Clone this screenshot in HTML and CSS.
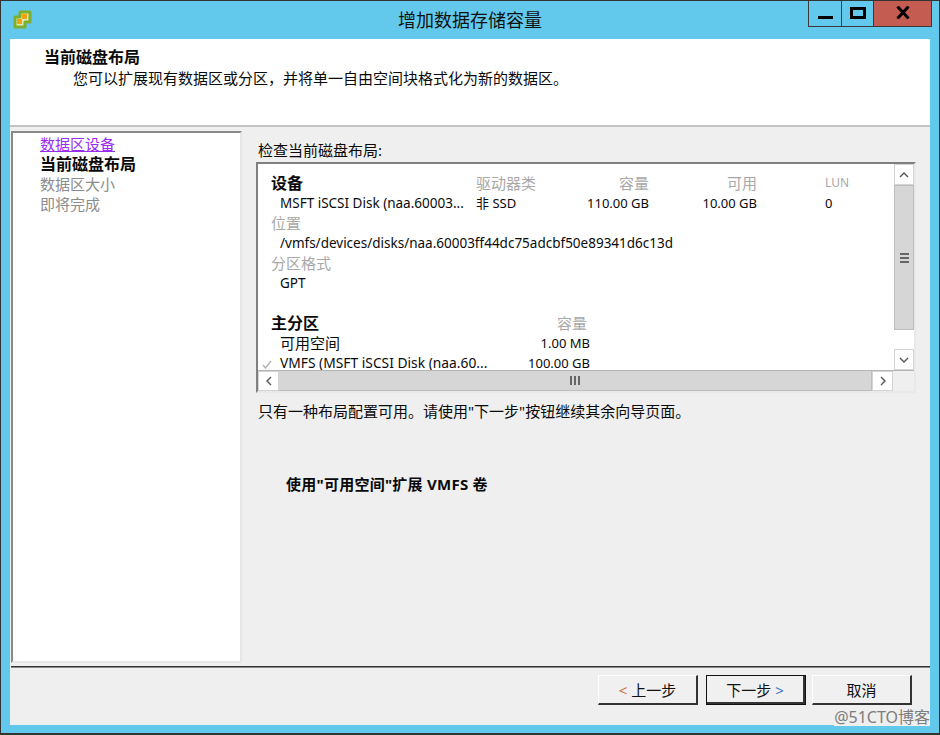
FILE: index.html
```html
<!DOCTYPE html>
<html lang="zh-CN">
<head>
  <meta charset="UTF-8">
  <title>增加数据存储容量</title>
  <link rel="stylesheet" href="styles.css">
</head>
<body>
  <div class="window">
    <div class="titlebar">
      <svg class="app-icon" width="21" height="21" viewBox="0 0 21 21">
        <path d="M8 3H18V13H13V18H3V8H8z" fill="#d8ecb4" stroke="#7fae2e" stroke-width="3" stroke-linejoin="round"/>
        <rect x="10" y="5" width="5" height="5" fill="#f2a30f"/>
        <rect x="5" y="10" width="5" height="5" fill="#f2a30f"/>
      </svg>
      <div class="title">增加数据存储容量</div>
      <div class="win-btns">
        <div class="win-btn min-btn"><span class="min-glyph"></span></div>
        <div class="win-btn max-btn"><span class="max-glyph"></span></div>
        <div class="win-btn close-btn">
          <svg width="14" height="13" viewBox="0 0 14 13"><path d="M1.500 0.500l11 12M12.500 0.500l-11 12" stroke="#000" stroke-width="3"/></svg>
        </div>
      </div>
    </div>

    <div class="client">
      <div class="header">
        <h1>当前磁盘布局</h1>
        <p>您可以扩展现有数据区或分区，并将单一自由空间块格式化为新的数据区。</p>
      </div>

      <div class="main">
        <div class="steps">
          <a href="#" class="step-link">数据区设备</a>
          <div class="step-current">当前磁盘布局</div>
          <div class="step-next">数据区大小</div>
          <div class="step-next">即将完成</div>
        </div>

        <div class="content">
          <div class="list-label">检查当前磁盘布局:</div>
          <div class="listbox">
            <div class="list-view">
              <div class="list-body">
                <div class="row device-head">
                  <b>设备</b><span class="head col-type">驱动器类</span><span class="head col-cap">容量</span><span class="head col-free">可用</span><span class="head col-lun">LUN</span>
                </div>
                <div class="row device-row">
                  <span class="name">MSFT iSCSI Disk (naa.60003...</span><span class="col-type">非 SSD</span><span class="col-cap">110.00 GB</span><span class="col-free">10.00 GB</span><span class="col-lun">0</span>
                </div>
                <div class="row head">位置</div>
                <div class="row value">/vmfs/devices/disks/naa.60003ff44dc75adcbf50e89341d6c13d</div>
                <div class="row head">分区格式</div>
                <div class="row value">GPT</div>
                <div class="row spacer"></div>
                <div class="row part-row">
                  <b>主分区</b><span class="head part-cap part-head">容量</span>
                </div>
                <div class="row part-row indent">
                  <span class="part-name">可用空间</span><span class="part-cap">1.00 MB</span>
                </div>
                <div class="row part-row indent last-row">
                  <svg class="check" width="10" height="9" viewBox="0 0 10 9"><path d="M1 5l2.500 3L9 1" fill="none" stroke="#b5b5b5" stroke-width="1.500"/></svg>
                  <span class="vmfs-name">VMFS (MSFT iSCSI Disk (naa.60...</span><span class="part-cap">100.00 GB</span>
                </div>
              </div>
              <div class="vscroll">
                <div class="sb-btn"><svg width="10" height="6" viewBox="0 0 10 6"><path d="M1 5l4-4 4 4" fill="none" stroke="#555" stroke-width="1.400"/></svg></div>
                <div class="v-thumb"><span class="grip-h"></span></div>
                <div class="v-rest"></div>
                <div class="sb-btn"><svg width="10" height="6" viewBox="0 0 10 6"><path d="M1 1l4 4 4-4" fill="none" stroke="#555" stroke-width="1.400"/></svg></div>
              </div>
            </div>
            <div class="hscroll">
              <div class="sb-btn sb-btn-h"><svg width="6" height="10" viewBox="0 0 6 10"><path d="M5 1L1 5l4 4" fill="none" stroke="#555" stroke-width="1.400"/></svg></div>
              <div class="h-thumb"><span class="grip-v"></span></div>
              <div class="sb-btn sb-btn-h"><svg width="6" height="10" viewBox="0 0 6 10"><path d="M1 1l4 4-4 4" fill="none" stroke="#555" stroke-width="1.400"/></svg></div>
              <div class="sb-corner"></div>
            </div>
          </div>
          <p class="note">只有一种布局配置可用。请使用"下一步"按钮继续其余向导页面。</p>
          <p class="action">使用"可用空间"扩展 VMFS 卷</p>
        </div>
      </div>

      <div class="footer">
        <button class="btn"><span class="lt">&lt;</span> 上一步</button>
        <button class="btn btn-default">下一步 <span class="gt">&gt;</span></button>
        <button class="btn">取消</button>
      </div>
    </div>
    <div class="watermark">@51CTO博客</div>
  </div>
</body>
</html>
```

FILE: styles.css
```css
* {
  margin: 0;
  padding: 0;
  box-sizing: border-box;
}

body {
  width: 940px;
  height: 735px;
  overflow: hidden;
  font-family: "Noto Sans", "Noto Sans CJK SC", sans-serif;
  font-size: 15px;
  color: #0a0a0a;
}

.window {
  position: relative;
  width: 940px;
  height: 735px;
  background-color: #62c9ec;
  border: 1px solid #333;
  border-bottom-width: 2px;
  padding: 0 9px 8px 9px;
  display: flex;
  flex-direction: column;
}

/* Title bar */
.titlebar {
  height: 38px;
  display: flex;
  align-items: flex-start;
  position: relative;
}

.app-icon {
  margin: 8px 0 0 2px;
}

.title {
  position: absolute;
  left: 0;
  right: 0;
  top: 8px;
  text-align: center;
  font-size: 18px;
  line-height: 22px;
  color: #111;
}

.win-btns {
  position: absolute;
  top: 0;
  right: -2px;
  display: flex;
  height: 26px;
  border: 1px solid #3a3a3a;
  border-top: none;
}

.win-btn {
  display: flex;
  align-items: center;
  justify-content: center;
}

.min-btn {
  width: 33px;
  border-right: 1px solid #3a3a3a;
}

.max-btn {
  width: 32px;
  border-right: 1px solid #3a3a3a;
}

.close-btn {
  width: 57px;
  background-color: #c45c52;
}

.min-glyph {
  width: 15px;
  height: 3px;
  background-color: #000;
  margin-top: 8px;
}

.max-glyph {
  width: 16px;
  height: 12px;
  border: 3px solid #000;
  margin-top: -2px;
}

.close-btn svg {
  margin-top: -2px;
}

/* Client area */
.client {
  flex: 1;
  background-color: #efefef;
  display: flex;
  flex-direction: column;
  min-height: 0;
}

.header {
  height: 88px;
  background-color: #fff;
  border-bottom: 2px solid #c4c4c4;
  padding: 8px 0 0 34px;
}

.header h1 {
  font-size: 16px;
  line-height: 21px;
  font-weight: bold;
}

.header p {
  font-size: 15px;
  line-height: 20px;
  padding-left: 29px;
}

.main {
  flex: 1;
  display: flex;
  padding: 4px 0 0 1px;
  min-height: 0;
}

.steps {
  width: 231px;
  height: 532px;
  background-color: #fff;
  border: 2px solid #e6e6e6;
  border-top: 2px solid #8a8a8a;
  border-left: 2px solid #8a8a8a;
  padding: 1px 0 0 27px;
  font-size: 15px;
  line-height: 20px;
}

.step-link {
  display: block;
  width: 75px;
  color: #9a2cf0;
}

.step-current {
  font-weight: bold;
  font-size: 16px;
}

.step-next {
  color: #8c8c8c;
}

.content {
  flex: 1;
  padding: 10px 0 0 14px;
}

.list-label {
  font-size: 15px;
  line-height: 19px;
  margin: 0 0 2px 2px;
}

/* Listbox */
.listbox {
  width: 660px;
  height: 231px;
  border: 2px solid #e9e9e9;
  border-top: 2px solid #808080;
  border-left: 2px solid #808080;
  display: flex;
  flex-direction: column;
  background-color: #fff;
}

.list-view {
  height: 206px;
  display: flex;
}

.list-body {
  flex: 1;
  overflow: hidden;
  padding: 9px 0 0 13px;
  font-size: 13px;
}

.row {
  height: 20px;
  line-height: 20px;
  display: flex;
  white-space: nowrap;
  position: relative;
}

.row b {
  font-size: 16px;
  width: 50px;
}

.head {
  color: #a8a8a8;
  font-size: 15px;
}

.spacer {
  height: 20px;
}

.value {
  padding-left: 9px;
  font-size: 13.5px;
}

.device-row .name {
  width: 205px;
  padding-left: 9px;
  font-size: 13.5px;
}

.device-head b {
  width: 205px;
}

.device-head .col-type,
.device-row .col-type {
  width: 100px;
}

.col-cap {
  width: 73px;
  text-align: right;
}

.col-free {
  width: 108px;
  text-align: right;
}

.col-lun {
  margin-left: 68px;
}

.device-head .col-lun {
  font-size: 12px;
}

.part-row b {
  width: 230px;
}

.part-row .part-cap {
  position: absolute;
  right: 304px;
}

.part-row .part-head {
  right: 307px;
}

.part-name {
  font-size: 15px;
}

.vmfs-name {
  font-size: 13.8px;
}

.indent {
  padding-left: 9px;
}

/* last row runs into the horizontal scrollbar */
.last-row {
  height: 17px;
  line-height: 14px;
  padding-top: 3px;
}

.check {
  position: absolute;
  left: -9px;
  top: 7px;
}

/* Scrollbars */
.vscroll {
  width: 20px;
  display: flex;
  flex-direction: column;
  background-color: #fff;
}

.sb-btn {
  height: 21px;
  background-color: #fff;
  border: 1px solid #d4d4d4;
  display: flex;
  align-items: center;
  justify-content: center;
}

.v-thumb {
  height: 145px;
  background-color: #d6d6d6;
  border: 1px solid #bdbdbd;
  display: flex;
  align-items: center;
  justify-content: center;
}

.v-rest {
  flex: 1;
}

.grip-h {
  width: 9px;
  height: 10px;
  background: repeating-linear-gradient(#666 0 2px, transparent 2px 4px);
}

.hscroll {
  flex: 1;
  display: flex;
  border-top: 1px solid #b5b5b5;
}

.sb-btn-h {
  width: 21px;
  height: 100%;
}

.h-thumb {
  flex: 1;
  background-color: #d6d6d6;
  border-bottom: 1px solid #bdbdbd;
  border-right: 1px solid #bdbdbd;
  display: flex;
  align-items: center;
  justify-content: center;
}

.grip-v {
  width: 10px;
  height: 9px;
  background: repeating-linear-gradient(90deg, #666 0 2px, transparent 2px 4px);
}

.sb-corner {
  width: 21px;
  background-color: #efefef;
}

.note {
  font-size: 15px;
  line-height: 19px;
  margin: 9px 0 0 2px;
}

.action {
  font-size: 15px;
  line-height: 20px;
  font-weight: bold;
  letter-spacing: 0.25px;
  margin: 53px 0 0 30px;
}

/* Footer */
.footer {
  height: 59px;
  border-top: 1px solid #333;
  box-shadow: inset 0 1px 0 #8a8a8a;
  margin-left: 1px;
  display: flex;
  justify-content: flex-end;
  gap: 6px;
  padding: 8px 18px 0 0;
}

.btn {
  width: 100px;
  height: 30px;
  background-color: #f0f0f0;
  border: 1px solid #fff;
  border-right: 2px solid #333;
  border-bottom: 2px solid #333;
  font-family: inherit;
  font-size: 15px;
  color: #111;
}

.btn-default {
  margin-left: 2px;
  outline: 1px solid #111;
  outline-offset: -1px;
  border-right-width: 3px;
  border-bottom-width: 3px;
}

.lt {
  color: #c8703a;
}

.gt {
  color: #3a70c8;
}

.watermark {
  position: absolute;
  right: 9px;
  bottom: 7px;
  font-size: 16px;
  line-height: 18px;
  color: #7d7d7d;
  background-color: #efefef;
}
```
